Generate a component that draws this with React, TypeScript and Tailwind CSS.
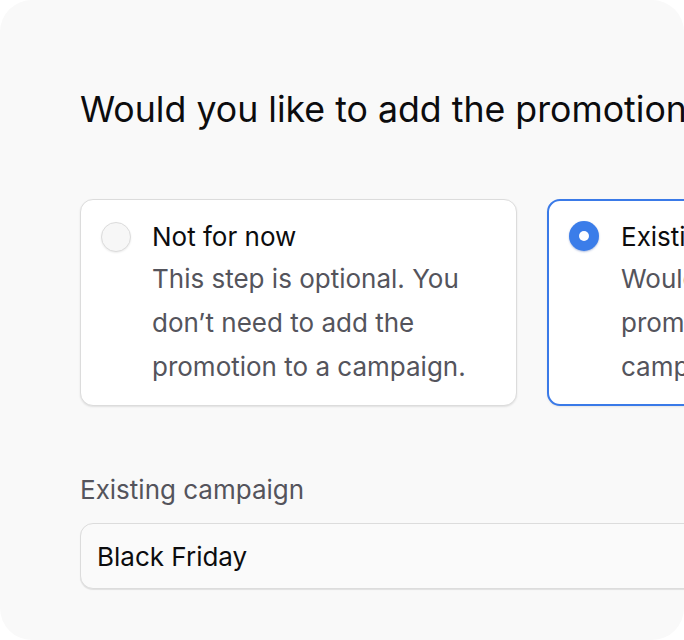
import { useState } from 'react';

type Choice = 'none' | 'existing';

const options: { id: Choice; title: string; body: string }[] = [
  {
    id: 'none',
    title: 'Not for now',
    body: 'This step is optional. You don\u2019t need to add the promotion to a campaign.',
  },
  {
    id: 'existing',
    title: 'Existing campaign',
    body: 'Would you like to add the promotion to an existing campaign?',
  },
];

export default function App() {
  const [choice, setChoice] = useState<Choice>('existing');

  return (
    <div className="w-[684px] h-[640px] bg-white font-['Inter',sans-serif]">
      <div className="w-full h-full rounded-[32px] bg-[#f9f9f9] overflow-hidden">
        <div className="pl-[80px] pt-[89px] w-[1000px]">
          <h1 className="text-[35.7px] leading-[40px] text-[#0c0c0e] whitespace-nowrap">
            Would you like to add the promotion to a campaign?
          </h1>

          <div className="mt-[70px] flex gap-[30px]">
            {options.map((opt) => {
              const active = choice === opt.id;
              return (
                <button
                  key={opt.id}
                  onClick={() => setChoice(opt.id)}
                  className={
                    active
                      ? 'w-[437px] h-[207px] shrink-0 flex gap-[22px] text-left rounded-[13px] bg-white border-2 border-[#3a7ae8] pl-[20px] pr-[20px] pt-[20px] shadow-[0_1px_2px_rgba(0,0,0,0.08)]'
                      : 'w-[437px] h-[207px] shrink-0 flex gap-[21px] text-left rounded-[13px] bg-white border border-[#dcdcdc] pl-[20px] pr-[20px] pt-[21px] shadow-[0_1px_2px_rgba(0,0,0,0.1)]'
                  }
                >
                  {active ? (
                    <span className="w-[30px] h-[30px] shrink-0 rounded-full bg-[#3b7de9] flex items-center justify-center shadow-[0_1px_2px_rgba(30,70,160,0.35)]">
                      <span className="w-[10px] h-[10px] rounded-full bg-white" />
                    </span>
                  ) : (
                    <span className="mt-[1px] w-[30px] h-[30px] shrink-0 rounded-full bg-[#f7f7f7] border border-[#dcdcdc] shadow-[0_1px_2px_rgba(0,0,0,0.08)]" />
                  )}
                  <span className="flex flex-col">
                    <span className="text-[26px] leading-[32px] text-[#0c0c0e]">{opt.title}</span>
                    <span className="mt-[4px] text-[26px] leading-[44px] text-[#54545c]">{opt.body}</span>
                  </span>
                </button>
              );
            })}
          </div>

          <div className="mt-[68px] text-[26px] leading-[32px] text-[#54545c]">Existing campaign</div>
          <div className="mt-[17px] w-[900px] h-[66px] rounded-[13px] bg-[#fafafa] border border-[#dcdcdc] shadow-[0_1px_1px_rgba(0,0,0,0.1)] flex items-center pl-[16px] text-[26px] text-[#0c0c0e]">
            Black Friday
          </div>
        </div>
      </div>
    </div>
  );
}
